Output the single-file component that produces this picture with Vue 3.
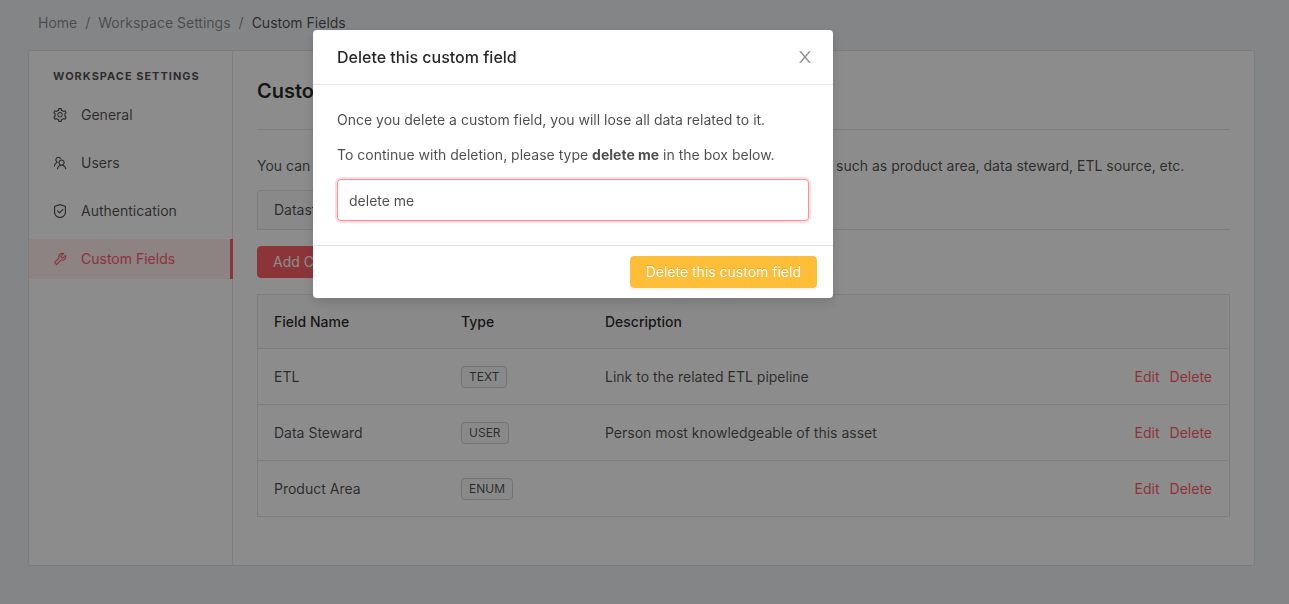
<script setup>
import { ref } from 'vue'

const confirmation = ref('delete me')

const menu = [
  {
    label: 'General',
    paths: ['M924.8 625.7l-65.5-56c3.1-19 4.7-38.4 4.7-57.8s-1.6-38.8-4.7-57.8l65.5-56a32.03 32.03 0 009.3-35.2l-.9-2.6a443.74 443.74 0 00-79.7-137.9l-1.8-2.1a32.12 32.12 0 00-35.1-9.5l-81.3 28.9c-30-24.6-63.5-44-99.7-57.6l-15.7-85a32.05 32.05 0 00-25.8-25.7l-2.7-.5c-52.1-9.4-106.9-9.4-159 0l-2.7.5a32.05 32.05 0 00-25.8 25.7l-15.8 85.4a351.86 351.86 0 00-99 57.4l-81.9-29.1a32 32 0 00-35.1 9.5l-1.8 2.1a446.02 446.02 0 00-79.7 137.9l-.9 2.6c-4.5 12.5-.8 26.5 9.3 35.2l66.3 56.6c-3.1 18.8-4.6 38-4.6 57.1 0 19.2 1.5 38.4 4.6 57.1L99 625.5a32.03 32.03 0 00-9.3 35.2l.9 2.6c18.1 50.4 44.9 96.9 79.7 137.9l1.8 2.1a32.12 32.12 0 0035.1 9.5l81.9-29.1c29.8 24.5 63.1 43.9 99 57.4l15.8 85.4a32.05 32.05 0 0025.8 25.7l2.7.5a449.4 449.4 0 00159 0l2.7-.5a32.05 32.05 0 0025.8-25.7l15.7-85a350 350 0 0099.7-57.6l81.3 28.9a32 32 0 0035.1-9.5l1.8-2.1c34.8-41.1 61.6-87.5 79.7-137.9l.9-2.6c4.5-12.3.8-26.3-9.3-35zM788.3 465.9c2.5 15.1 3.8 30.6 3.8 46.1s-1.3 31-3.8 46.1l-6.6 40.1 74.7 63.9a370.03 370.03 0 01-42.6 73.6L721 702.8l-31.4 25.8c-23.9 19.6-50.5 35-79.3 45.8l-38.1 14.3-17.9 97a377.5 377.5 0 01-85 0l-17.9-97.2-37.8-14.5c-28.5-10.8-55-26.2-78.7-45.7l-31.4-25.9-93.4 33.2c-17-22.9-31.2-47.6-42.6-73.6l75.5-64.5-6.5-40c-2.4-14.9-3.7-30.3-3.7-45.5 0-15.3 1.2-30.6 3.7-45.5l6.5-40-75.5-64.5c11.3-26.1 25.6-50.7 42.6-73.6l93.4 33.2 31.4-25.9c23.7-19.5 50.2-34.9 78.7-45.7l37.9-14.3 17.9-97.2c28.1-3.2 56.8-3.2 85 0l17.9 97 38.1 14.3c28.7 10.8 55.4 26.2 79.3 45.8l31.4 25.8 92.8-32.9c17 22.9 31.2 47.6 42.6 73.6L781.8 426l6.5 39.9zM512 326c-97.2 0-176 78.8-176 176s78.8 176 176 176 176-78.8 176-176-78.8-176-176-176zm79.2 255.2A111.6 111.6 0 01512 614c-29.9 0-58-11.7-79.2-32.8A111.6 111.6 0 01400 502c0-29.9 11.7-58 32.8-79.2C454 401.6 482.1 390 512 390c29.9 0 58 11.6 79.2 32.8A111.6 111.6 0 01624 502c0 29.9-11.7 58-32.8 79.2z'],
  },
  {
    label: 'Users',
    paths: ['M824.2 699.9a301.55 301.55 0 00-86.4-60.4C783.1 602.8 812 546.8 812 484c0-110.8-92.4-201.7-203.2-200-109.1 1.7-197 90.6-197 200 0 62.8 29 118.8 74.2 155.5a300.95 300.95 0 00-86.4 60.4C345 754.6 314 826.8 312 903.8a8 8 0 008 8.2h56c4.3 0 7.9-3.4 8-7.7 1.9-58 25.4-112.3 66.7-153.5A226.62 226.62 0 01612 684c60.9 0 118.2 23.7 161.3 66.8C814.6 792 838 846.3 840 904.3c.1 4.3 3.7 7.7 8 7.7h56a8 8 0 008-8.2c-2-77-33-149.2-87.8-203.9zM612 612c-34.2 0-66.4-13.3-90.5-37.5a126.86 126.86 0 01-37.5-91.8c.3-32.8 13.4-64.5 36.3-88 24-24.6 56.1-38.3 90.4-38.7 33.9-.3 66.8 12.9 91 36.6 24.8 24.3 38.4 56.8 38.4 91.4 0 34.2-13.3 66.3-37.5 90.5A127.3 127.3 0 01612 612zM361.5 510.4c-.9-8.7-1.4-17.5-1.4-26.4 0-15.9 1.5-31.4 4.3-46.5.7-3.6-1.2-7.3-4.5-8.8-13.6-6.1-26.1-14.5-36.9-25.1a127.54 127.54 0 01-38.7-95.4c.9-32.1 13.8-62.6 36.3-85.6 24.7-25.3 57.9-39.1 93.2-38.7 31.9.3 62.7 12.6 86 34.4 7.9 7.4 14.7 15.6 20.4 24.4 2 3.1 5.9 4.4 9.3 3.2 17.6-6.1 36.2-10.4 55.3-12.4 5.6-.6 8.8-6.6 6.3-11.6-32.5-64.3-98.9-108.7-175.7-109.9-110.9-1.7-203.3 89.2-203.3 199.9 0 62.8 28.9 118.8 74.2 155.5-31.8 14.7-61.1 35-86.5 60.4-54.8 54.7-85.8 126.9-87.8 204a8 8 0 008 8.2h56.1c4.3 0 7.9-3.4 8-7.7 1.9-58 25.4-112.3 66.7-153.5 29.4-29.4 65.4-49.8 104.7-59.7 3.9-1 6.5-4.7 6-8.7z'],
  },
  {
    label: 'Authentication',
    paths: [
      'M512 64L128 192v384c0 212.1 171.9 384 384 384s384-171.9 384-384V192L512 64zm312 512c0 172.3-139.7 312-312 312S200 748.3 200 576V246l312-110 312 110v330z',
      'M378.4 475.1a35.91 35.91 0 00-50.9 0 35.91 35.91 0 000 50.9l129.4 129.4 2.1 2.1a33.98 33.98 0 0048.1 0L730.6 434a33.98 33.98 0 000-48.1l-2.8-2.8a33.98 33.98 0 00-48.1 0L483 579.7 378.4 475.1z',
    ],
  },
  {
    label: 'Custom Fields',
    active: true,
    paths: ['M876.6 239.5c-.5-.9-1.2-1.8-2-2.5-5-5-13.1-5-18.1 0L684.2 409.3l-67.9-67.9L788.7 169c.8-.8 1.4-1.6 2-2.5 3.6-6.1 1.6-13.9-4.5-17.5-98.2-58-226.8-44.7-311.3 39.7-67 67-89.2 162-66.5 247.4l-293 293c-3 3-2.8 7.9.3 11l169.7 169.7c3.1 3.1 8.1 3.3 11 .3l292.9-292.9c85.5 22.8 180.5.7 247.6-66.4 84.4-84.5 97.7-213.1 39.7-311.3zM786 499.8c-58.1 58.1-145.3 69.3-214.6 33.6l-8.8 8.8-.1-.1-274 274.1-79.2-79.2 230.1-230.1s0 .1.1.1l52.8-52.8c-35.7-69.3-24.5-156.5 33.6-214.6a184.2 184.2 0 01144-53.5L537 318.9a32.05 32.05 0 000 45.3l124.5 124.5a32.05 32.05 0 0045.3 0l132.8-132.8c3.7 51.8-14.4 104.8-53.6 143.9z'],
  },
]

const fields = [
  { name: 'ETL', type: 'TEXT', description: 'Link to the related ETL pipeline' },
  { name: 'Data Steward', type: 'USER', description: 'Person most knowledgeable of this asset' },
  { name: 'Product Area', type: 'ENUM', description: '' },
]
</script>

<template>
  <div class="page">
    <nav class="breadcrumb" aria-label="Breadcrumb">
      <a href="#">Home</a>
      <span class="separator">/</span>
      <a href="#">Workspace Settings</a>
      <span class="separator">/</span>
      <span class="current">Custom Fields</span>
    </nav>

    <div class="card">
      <aside class="sidebar">
        <h2 class="sidebar-title">WORKSPACE SETTINGS</h2>
        <nav class="menu" aria-label="Workspace settings">
          <a
            v-for="item in menu"
            :key="item.label"
            href="#"
            class="menu-item"
            :class="{ active: item.active }"
          >
            <svg class="menu-icon" viewBox="64 64 896 896" aria-hidden="true">
              <path v-for="d in item.paths" :key="d" :d="d" />
            </svg>
            <span>{{ item.label }}</span>
          </a>
        </nav>
      </aside>

      <main class="content">
        <h1 class="title">Custom Fields</h1>
        <p class="intro">
          You can use custom fields to attach additional metadata to the assets in the workspace such as product area, data steward, ETL source, etc.
        </p>
        <div class="tabs">
          <button type="button" class="tab">Datastores</button>
        </div>
        <button type="button" class="button primary">Add Custom Field</button>
        <div class="table-frame">
          <table class="table">
            <thead>
              <tr>
                <th class="col-name">Field Name</th>
                <th class="col-type">Type</th>
                <th>Description</th>
                <th></th>
              </tr>
            </thead>
            <tbody>
              <tr v-for="field in fields" :key="field.name">
                <td>{{ field.name }}</td>
                <td><span class="tag">{{ field.type }}</span></td>
                <td>{{ field.description }}</td>
                <td>
                  <div class="actions">
                    <a href="#">Edit</a>
                    <a href="#">Delete</a>
                  </div>
                </td>
              </tr>
            </tbody>
          </table>
        </div>
      </main>
    </div>

    <div class="mask">
      <div class="modal" role="dialog" aria-modal="true" aria-labelledby="modal-title">
        <header class="modal-header">
          <h2 id="modal-title" class="modal-title">Delete this custom field</h2>
          <button type="button" class="close" aria-label="Close">
            <svg viewBox="64 64 896 896" aria-hidden="true">
              <path d="M563.8 512l262.5-312.9c4.4-5.2.7-13.1-6.1-13.1h-79.8c-4.7 0-9.2 2.1-12.3 5.7L511.6 449.8 295.1 191.7c-3-3.6-7.5-5.7-12.3-5.7H203c-6.8 0-10.5 7.9-6.1 13.1L459.4 512 196.9 824.9A7.95 7.95 0 00203 838h79.8c4.7 0 9.2-2.1 12.3-5.7l216.5-258.1 216.5 258.1c3 3.6 7.5 5.7 12.3 5.7h79.8c6.8 0 10.5-7.9 6.1-13.1L563.8 512z" />
            </svg>
          </button>
        </header>
        <div class="modal-body">
          <p>Once you delete a custom field, you will lose all data related to it.</p>
          <label for="confirmation">To continue with deletion, please type <strong>delete me</strong> in the box below.</label>
          <input id="confirmation" v-model="confirmation" type="text" class="input" autocomplete="off">
        </div>
        <footer class="modal-footer">
          <button type="button" class="button warning">Delete this custom field</button>
        </footer>
      </div>
    </div>
  </div>
</template>

<style>
html {
  background: #f0f2f5;
}
</style>

<style scoped>
.page,
.page * {
  box-sizing: border-box;
}

.page {
  padding: 12px 34px 38px 28px;
  color: rgba(0, 0, 0, 0.7);
  font-family: Inter, "Liberation Sans", sans-serif;
  font-size: 14px;
  line-height: 22px;
}

h1,
h2,
p {
  margin: 0;
}

a {
  color: #ff6169;
  text-decoration: none;
}

button,
input {
  font: inherit;
}

.breadcrumb {
  display: flex;
  gap: 8px;
  padding: 0 10px;
}

.breadcrumb a,
.separator {
  color: rgba(0, 0, 0, 0.45);
}

.current {
  color: rgba(0, 0, 0, 0.7);
}

.card {
  display: flex;
  margin-top: 16px;
  background: #fff;
  border: 1px solid #e3e3e3;
  border-radius: 2px;
}

.sidebar {
  flex: 0 0 204px;
  border-right: 1px solid #e3e3e3;
}

.sidebar-title {
  padding: 14px 0 0 24px;
  color: rgba(0, 0, 0, 0.7);
  font-size: 11px;
  font-weight: 700;
  letter-spacing: 1px;
  white-space: nowrap;
}

.menu {
  display: flex;
  flex-direction: column;
  gap: 8px;
  margin: 8px -1px 0 0;
}

.menu-item {
  display: flex;
  align-items: center;
  gap: 14px;
  height: 40px;
  padding-left: 24px;
  color: rgba(0, 0, 0, 0.7);
}

.menu-item.active {
  background: #ffeeed;
  border-right: 3px solid #ff6169;
  color: #ff6169;
}

.menu-icon {
  width: 14px;
  height: 14px;
  fill: currentColor;
}

.content {
  flex: 1;
  min-width: 0;
  padding: 24px 24px 48px;
}

.title {
  padding-bottom: 22px;
  border-bottom: 1px solid #e3e3e3;
  color: rgba(0, 0, 0, 0.85);
  font-size: 20px;
  font-weight: 600;
  line-height: 32px;
}

.intro {
  margin: 25px 0 13px;
}

.tabs {
  display: flex;
  border-bottom: 1px solid #e3e3e3;
  margin-bottom: 16px;
}

.tab {
  height: 39px;
  padding: 0 16px;
  background: #fafafa;
  border: 1px solid #e3e3e3;
  border-bottom: 0;
  border-radius: 4px 4px 0 0;
  color: rgba(0, 0, 0, 0.7);
}

.button {
  height: 32px;
  padding: 0 15px;
  border: 1px solid transparent;
  border-radius: 4px;
  color: #fff;
  line-height: 22px;
}

.primary {
  display: block;
  background: #ff6169;
  border-color: #ff6169;
}

.warning {
  background: #ffbe38;
  border-color: #ffbe38;
  box-shadow: 0 2px 0 rgba(0, 0, 0, 0.04);
  text-shadow: 0 -1px 0 rgba(0, 0, 0, 0.12);
}

.table-frame {
  margin-top: 16px;
  padding-right: 1px;
  border: 1px solid #e3e3e3;
  border-bottom: 0;
}

.table {
  width: 100%;
  border-collapse: separate;
  border-spacing: 0;
  text-align: left;
}

.table th,
.table td {
  padding: 16px;
  border-bottom: 1px solid #e3e3e3;
}

.table th {
  padding-bottom: 15px;
  background: #fafafa;
  color: rgba(0, 0, 0, 0.85);
  font-weight: 500;
}

.table td {
  height: 56px;
}

.col-name {
  width: 187px;
}

.col-type {
  width: 144px;
}

.tag {
  display: inline-block;
  padding: 0 7px;
  background: #fafafa;
  border: 1px solid #d0d0d0;
  border-radius: 4px;
  font-size: 12px;
  line-height: 20px;
  vertical-align: top;
}

.actions {
  display: flex;
  justify-content: flex-end;
  gap: 10px;
}

.mask {
  position: fixed;
  inset: 0;
  display: flex;
  align-items: flex-start;
  justify-content: center;
  padding: 30px 143px 30px 0;
  background: rgba(0, 0, 0, 0.45);
}

.modal {
  width: 520px;
  background: #fff;
  border-radius: 4px;
  box-shadow: 0 4px 12px rgba(0, 0, 0, 0.15);
}

.modal-header {
  display: flex;
  align-items: center;
  justify-content: space-between;
  height: 55px;
  padding: 0 20px 0 24px;
  border-bottom: 1px solid #e3e3e3;
}

.modal-title {
  color: rgba(0, 0, 0, 0.85);
  font-size: 16px;
  font-weight: 500;
}

.close {
  display: flex;
  padding: 0;
  background: none;
  border: 0;
}

.close svg {
  width: 16px;
  height: 16px;
  fill: rgba(0, 0, 0, 0.45);
}

.modal-body {
  display: flex;
  flex-direction: column;
  gap: 13px;
  padding: 24px;
}

.input {
  width: 100%;
  height: 42px;
  padding: 0 11px;
  background: #fff;
  border: 1px solid #ff8f94;
  border-radius: 4px;
  box-shadow: 0 0 0 2px rgba(255, 97, 105, 0.2);
  color: rgba(0, 0, 0, 0.7);
  outline: 0;
}

.modal-footer {
  display: flex;
  justify-content: flex-end;
  padding: 10px 16px;
  border-top: 1px solid #e3e3e3;
}
</style>
